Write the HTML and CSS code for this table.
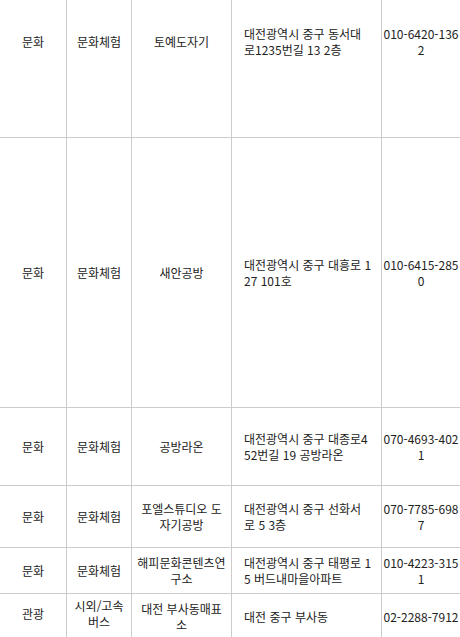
FILE: index.html
```html
<!DOCTYPE html>
<html lang="ko">
<head>
<meta charset="utf-8">
<title>대전 중구 업체 목록</title>
<link rel="stylesheet" href="styles.css">
</head>
<body>
<table class="list">
  <colgroup>
    <col class="c-cat">
    <col class="c-sub">
    <col class="c-name">
    <col class="c-addr">
    <col class="c-tel">
  </colgroup>
  <tbody>
    <tr class="r1">
      <td>문화</td><td>문화체험</td><td class="name">토예도자기</td>
      <td class="addr">대전광역시 중구 동서대로1235번길 13 2층</td><td class="tel">010-6420-1362</td>
    </tr>
    <tr class="r2">
      <td>문화</td><td>문화체험</td><td class="name">새안공방</td>
      <td class="addr">대전광역시 중구 대흥로 127 101호</td><td class="tel">010-6415-2850</td>
    </tr>
    <tr class="r3">
      <td>문화</td><td>문화체험</td><td class="name">공방라온</td>
      <td class="addr">대전광역시 중구 대종로452번길 19 공방라온</td><td class="tel">070-4693-4021</td>
    </tr>
    <tr class="r4">
      <td>문화</td><td>문화체험</td><td class="name">포엘스튜디오 도자기공방</td>
      <td class="addr">대전광역시 중구 선화서로 5 3층</td><td class="tel">070-7785-6987</td>
    </tr>
    <tr class="r5">
      <td>문화</td><td>문화체험</td><td class="name">해피문화콘텐츠연구소</td>
      <td class="addr">대전광역시 중구 태평로 15 버드내마을아파트</td><td class="tel">010-4223-3151</td>
    </tr>
    <tr class="r6">
      <td>관광</td><td>시외/고속 버스</td><td class="name">대전 부사동매표소</td>
      <td class="addr">대전 중구 부사동</td><td class="tel">02-2288-7912</td>
    </tr>
  </tbody>
</table>
</body>
</html>
```

FILE: styles.css
```css
html, body {
  margin: 0;
  padding: 0;
  background: #fff;
  overflow: hidden;
}

.list {
  width: 460px;
  margin-top: -53px;
  table-layout: fixed;
  border-collapse: separate;
  border-spacing: 0;
  font-family: "Noto Sans CJK KR", sans-serif;
  font-size: 12px;
  line-height: 16px;
  color: #222;
}

.c-cat { width: 67px; }
.c-sub { width: 65px; }
.c-name { width: 100px; }
.c-addr { width: 150px; }
.c-tel { width: 78px; }

.list td {
  box-sizing: border-box;
  padding: 0 4px;
  text-align: center;
  vertical-align: middle;
  word-break: break-all;
  border-right: 1px solid #ccc;
  border-bottom: 1px solid #ccc;
}

.list td:last-child {
  border-right: none;
}

.list td.name {
  padding: 0 5px;
}

.list td.addr {
  text-align: left;
  padding: 0 9.5px 0 12px;
}

.list td.tel {
  padding: 0 1px;
}

.r1 { height: 191px; }
.r2 { height: 270px; }
.r3 { height: 78px; }
.r4 { height: 62px; }
.r5 { height: 46px; }
.r6 { height: 47px; }
.r6 td { padding-bottom: 6px; }
```
